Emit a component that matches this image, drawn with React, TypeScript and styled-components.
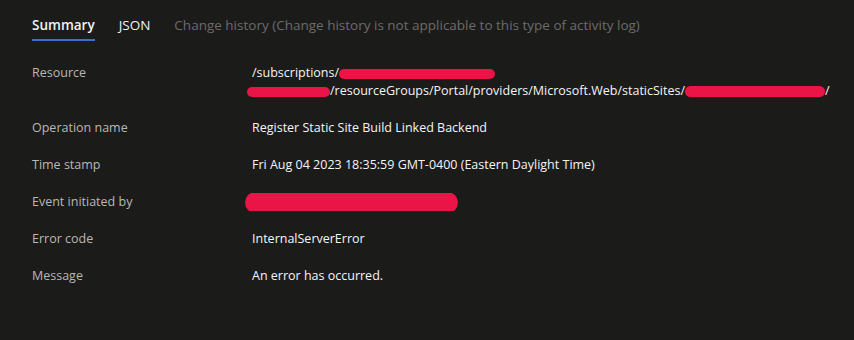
import React from "react";
import styled, { createGlobalStyle } from "styled-components";

const GlobalStyle = createGlobalStyle`
  html, body {
    margin: 0;
    padding: 0;
    background: #1b1b1a;
  }
  body {
    font-family: "Open Sans", "Noto Sans", sans-serif;
  }
`;

const Page = styled.div`
  width: 853px;
  height: 340px;
  background: #1b1b1a;
  border-right: 1px solid #4d4d4d;
  padding-left: 32px;
  box-sizing: content-box;
  overflow: hidden;
`;

const TabBar = styled.div`
  display: flex;
  gap: 24px;
  align-items: flex-end;
`;

const Tab = styled.div<{ $active?: boolean; $disabled?: boolean }>`
  padding-top: 16px;
  padding-bottom: 5px;
  line-height: 18px;
  font-size: 13.5px;
  font-weight: ${(p) => (p.$active ? 600 : 400)};
  color: ${(p) => (p.$disabled ? "#6b6b6b" : "#f2f2f2")};
  border-bottom: 2px solid ${(p) => (p.$active ? "#3a6fd6" : "transparent")};
  white-space: nowrap;
`;

const Details = styled.div`
  margin-top: 23px;
  display: grid;
  grid-template-columns: 220px 578px;
  row-gap: 19px;
  font-size: 12.5px;
  line-height: 18px;
`;

const Label = styled.div`
  color: #b8b8b8;
`;

const Value = styled.div`
  color: #f5f5f5;
  height: ${(p: { $lines?: number }) => (p.$lines ?? 1) * 18}px;
`;

const Line = styled.div`
  white-space: nowrap;
  overflow: hidden;
  margin-left: -8px;
  padding-left: 8px;
  height: 18px;
`;

const Redact = styled.span<{ $w: number; $h: number; $shift?: number }>`
  display: inline-block;
  width: ${(p) => p.$w}px;
  height: ${(p) => p.$h}px;
  margin: -6px 0 -6px ${(p) => p.$shift ?? 0}px;
  border-radius: ${(p) => p.$h / 2}px;
  background: #ea1446;
  vertical-align: middle;
`;

export default function App() {
  return (
    <Page>
      <GlobalStyle />
      <TabBar>
        <Tab $active>Summary</Tab>
        <Tab>JSON</Tab>
        <Tab $disabled>
          Change history (Change history is not applicable to this type of activity log)
        </Tab>
      </TabBar>
      <Details>
        <Label>Resource</Label>
        <Value $lines={2}>
          <Line>
            /subscriptions/
            <Redact $w={156} $h={10} />
          </Line>
          <Line>
            <Redact $w={83} $h={10} $shift={-5} />
            /resourceGroups/Portal/providers/Microsoft.Web/staticSites/
            <Redact $w={140} $h={11} />
            /b
          </Line>
        </Value>

        <Label>Operation name</Label>
        <Value>Register Static Site Build Linked Backend</Value>

        <Label>Time stamp</Label>
        <Value>Fri Aug 04 2023 18:35:59 GMT-0400 (Eastern Daylight Time)</Value>

        <Label>Event initiated by</Label>
        <Value>
          <Line>
            <Redact $w={213} $h={21} $shift={-7} />
          </Line>
        </Value>

        <Label>Error code</Label>
        <Value>InternalServerError</Value>

        <Label>Message</Label>
        <Value>An error has occurred.</Value>
      </Details>
    </Page>
  );
}
